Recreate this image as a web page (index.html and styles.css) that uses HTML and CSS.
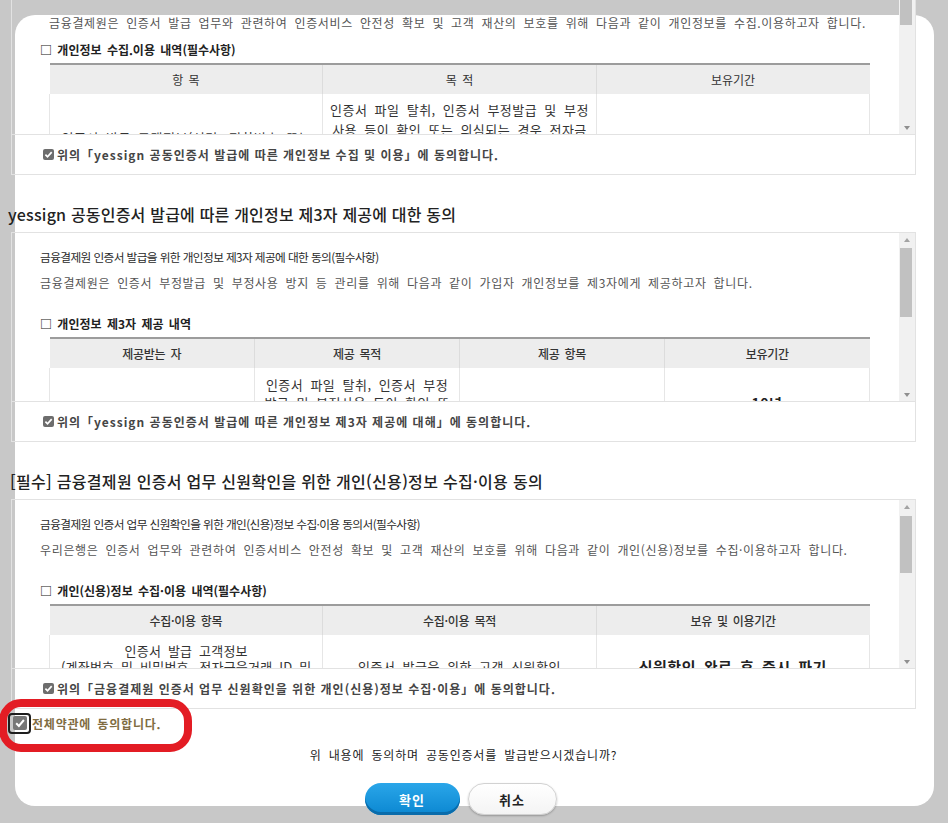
FILE: index.html
```
<!DOCTYPE html>
<html lang="ko">
<head>
    <meta charset="UTF-8">
    <meta name="viewport" content="width=device-width, initial-scale=1.0">
    <title>공동인증서 발급 약관동의</title>
    <link rel="stylesheet" href="styles.css">
</head>
<body>
    <div class="modal">
        <div class="modal-body">

            <div class="terms-box">
                <div class="scroll-area">
                    <div class="scroll-content first">
                        <p class="desc">금융결제원은 인증서 발급 업무와 관련하여 인증서비스 안전성 확보 및 고객 재산의 보호를 위해 다음과 같이 개인정보를 수집.이용하고자 합니다.</p>
                        <p class="sub-title first-sub">□ 개인정보 수집.이용 내역(필수사항)</p>
                        <table class="info-table">
                            <tr><th>항 목</th><th>목 적</th><th>보유기간</th></tr>
                            <tr>
                                <td class="raise">인증서 발급 고객정보(성명, 전화번호 또는<br>휴대폰번호, 이메일 등)</td>
                                <td>인증서 파일 탈취, 인증서 부정발급 및 부정<br>사용 등이 확인 또는 의심되는 경우 전자금<br>융거래 관련 법령에 따른 수사 협조 및 분쟁<br>해결, 인증서 발급 및 관리 업무 수행, 민원<br>처리 및 고객 안내</td>
                                <td class="strong">10년</td>
                            </tr>
                        </table>
                    </div>
                    <div class="scrollbar">
                        <span class="arrow up"></span>
                        <span class="thumb thumb-1"></span>
                        <span class="track"></span>
                        <span class="arrow down"></span>
                    </div>
                </div>
                <div class="agree-row">
                    <svg class="chk" width="11" height="11" viewBox="0 0 11 11"><rect width="11" height="11" rx="2" fill="#6d6d6d"/><path d="M2.4 5.7 L4.5 7.8 L8.7 3.1" fill="none" stroke="#fff" stroke-width="1.7"/></svg>
                    위의「yessign 공동인증서 발급에 따른 개인정보 수집 및 이용」에 동의합니다.
                </div>
            </div>

            <h3 class="terms-title">yessign 공동인증서 발급에 따른 개인정보 제3자 제공에 대한 동의</h3>
            <div class="terms-box">
                <div class="scroll-area">
                    <div class="scroll-content">
                        <p class="lead">금융결제원 인증서 발급을 위한 개인정보 제3자 제공에 대한 동의(필수사항)</p>
                        <p class="desc">금융결제원은 인증서 부정발급 및 부정사용 방지 등 관리를 위해 다음과 같이 가입자 개인정보를 제3자에게 제공하고자 합니다.</p>
                        <p class="sub-title">□ 개인정보 제3자 제공 내역</p>
                        <table class="info-table bold-head">
                            <tr><th>제공받는 자</th><th>제공 목적</th><th>제공 항목</th><th>보유기간</th></tr>
                            <tr>
                                <td class="low">금융결제원</td>
                                <td class="lines-tight">인증서 파일 탈취, 인증서 부정<br>발급 및 부정사용 등이 확인 또<br>는 의심되는 경우</td>
                                <td class="low">성명, 전화번호, 이메일</td>
                                <td class="strong">10년</td>
                            </tr>
                        </table>
                    </div>
                    <div class="scrollbar">
                        <span class="arrow up"></span>
                        <span class="thumb thumb-2"></span>
                        <span class="track"></span>
                        <span class="arrow down"></span>
                    </div>
                </div>
                <div class="agree-row">
                    <svg class="chk" width="11" height="11" viewBox="0 0 11 11"><rect width="11" height="11" rx="2" fill="#6d6d6d"/><path d="M2.4 5.7 L4.5 7.8 L8.7 3.1" fill="none" stroke="#fff" stroke-width="1.7"/></svg>
                    위의「yessign 공동인증서 발급에 따른 개인정보 제3자 제공에 대해」에 동의합니다.
                </div>
            </div>

            <h3 class="terms-title wide">[필수] 금융결제원 인증서 업무 신원확인을 위한 개인(신용)정보 수집·이용 동의</h3>
            <div class="terms-box">
                <div class="scroll-area">
                    <div class="scroll-content">
                        <p class="lead">금융결제원 인증서 업무 신원확인을 위한 개인(신용)정보 수집·이용 동의서(필수사항)</p>
                        <p class="desc">우리은행은 인증서 업무와 관련하여 인증서비스 안전성 확보 및 고객 재산의 보호를 위해 다음과 같이 개인(신용)정보를 수집·이용하고자 합니다.</p>
                        <p class="sub-title">□ 개인(신용)정보 수집·이용 내역(필수사항)</p>
                        <table class="info-table bold-head">
                            <tr><th>수집·이용 항목</th><th>수집·이용 목적</th><th>보유 및 이용기간</th></tr>
                            <tr>
                                <td class="lines-mid">인증서 발급 고객정보<br>(계좌번호 및 비밀번호, 전자금융거래 ID 및<br>비밀번호, 휴대폰번호 등)</td>
                                <td>인증서 발급을 위한 고객 신원확인</td>
                                <td class="strong big">신원확인 완료 후 즉시 파기</td>
                            </tr>
                        </table>
                    </div>
                    <div class="scrollbar">
                        <span class="arrow up"></span>
                        <span class="thumb thumb-3"></span>
                        <span class="track"></span>
                        <span class="arrow down"></span>
                    </div>
                </div>
                <div class="agree-row">
                    <svg class="chk" width="11" height="11" viewBox="0 0 11 11"><rect width="11" height="11" rx="2" fill="#6d6d6d"/><path d="M2.4 5.7 L4.5 7.8 L8.7 3.1" fill="none" stroke="#fff" stroke-width="1.7"/></svg>
                    위의「금융결제원 인증서 업무 신원확인을 위한 개인(신용)정보 수집·이용」에 동의합니다.
                </div>
            </div>

            <div class="all-agree">
                <span class="focus-ring">
                    <svg width="14" height="14" viewBox="0 0 14 14"><rect width="14" height="14" rx="2" fill="#777"/><path d="M3.2 7.2 L5.9 9.9 L10.9 4" fill="none" stroke="#fff" stroke-width="2"/></svg>
                </span>
                <span class="all-text">전체약관에 동의합니다.</span>
            </div>

            <p class="question">위 내용에 동의하며 공동인증서를 발급받으시겠습니까?</p>

            <div class="btns">
                <button class="btn btn-ok">확인</button>
                <button class="btn btn-cancel">취소</button>
            </div>
        </div>
    </div>
    <div class="highlight"></div>
</body>
</html>
```

FILE: styles.css
```
body{
    margin: 0;
    height: 823px;
    overflow: hidden;
    background: #c8c8c8;
    font-family: "Noto Sans CJK KR", "Noto Sans", sans-serif;
    color: #333;
}
p{
    margin: 0;
}

.modal {
    display: flow-root;
    width: 919px;
    height: 791px;
    margin: 15px 0 0 15px;
    background: #fff;
    border-radius: 20px;
}
.modal-body {
    width: 905px;
    margin: -50px 0 0 -4px;
}

.terms-title {
    margin: 27px 0 6px -3px;
    height: 24px;
    line-height: 24px;
    font-size: 16px;
    font-weight: 500;
    letter-spacing: 0.2px;
    color: #222;
    white-space: nowrap;
}
.terms-title.wide {
    margin-left: -1px;
    letter-spacing: 0.3px;
}

.terms-box {
    border: 1px solid #e2e2e2;
}
.scroll-area {
    display: flex;
    height: 168px;
    border-bottom: 1px solid #e2e2e2;
}
.scroll-content {
    flex: 1;
    overflow: hidden;
    padding: 14px 0 0 28px;
}
.scroll-content.first {
    padding-top: 47px;
}

.lead {
    line-height: 20px;
    font-size: 11.7px;
    letter-spacing: -0.6px;
    color: #2a2a2a;
    white-space: nowrap;
}
.desc {
    margin-top: 6px;
    line-height: 20px;
    font-size: 12px;
    letter-spacing: 0.65px;
    word-spacing: 3px;
    color: #555;
    white-space: nowrap;
}
.first .desc {
    margin-top: 0;
    padding-left: 9px;
}
.sub-title {
    margin-top: 21px;
    line-height: 20px;
    font-size: 12px;
    font-weight: 700;
    word-spacing: 2px;
    color: #222;
}
.first-sub {
    margin-top: 7px;
}

.info-table {
    width: 821px;
    margin: 3px 0 0 9px;
    border-collapse: collapse;
    table-layout: fixed;
}
.info-table th {
    height: 27px;
    background: #ededed;
    border-top: 2px solid #9c9c9c;
    border-left: 1px solid #dcdcdc;
    font-size: 12px;
    font-weight: 400;
    color: #333;
    word-spacing: 2px;
}
.info-table th:first-child {
    border-left: none;
}
.bold-head th {
    font-weight: 500;
    letter-spacing: -0.3px;
}
.info-table td {
    padding: 6px 6px;
    border: 1px solid #e6e6e6;
    border-top: none;
    text-align: center;
    vertical-align: middle;
    line-height: 20px;
    font-size: 13px;
    letter-spacing: 0.5px;
    word-spacing: 3px;
    color: #333;
    white-space: nowrap;
}
.info-table td.raise {
    padding-bottom: 10px;
}
.info-table td.low {
    vertical-align: bottom;
}
.info-table td.lines-tight {
    padding: 8px 4px;
    line-height: 18px;
}
.info-table td.lines-mid {
    padding: 8px 4px;
    line-height: 16px;
    letter-spacing: 0.2px;
}
.info-table td.strong {
    font-weight: 700;
    font-size: 14px;
    color: #222;
}
.info-table td.big {
    font-size: 15px;
}

.scrollbar {
    display: flex;
    flex-direction: column;
    width: 16px;
    background: #f1f1f1;
}
.arrow {
    position: relative;
    height: 14px;
    flex: none;
}
.arrow::after {
    content: "";
    position: absolute;
    left: 5px;
    width: 0;
    height: 0;
    border-left: 3px solid transparent;
    border-right: 3px solid transparent;
}
.arrow.up::after {
    top: 5px;
    border-bottom: 4px solid #a3a3a3;
}
.arrow.down::after {
    top: 6px;
    border-top: 4px solid #8f8f8f;
}
.thumb {
    flex: none;
    margin: 0 3px 0 1px;
    background: #c1c1c1;
}
.thumb-1 {
    height: 45px;
}
.thumb-2 {
    margin-top: 1px;
    height: 69px;
}
.thumb-3 {
    margin-top: 2px;
    height: 57px;
}
.track {
    flex: 1;
}

.agree-row {
    display: flex;
    align-items: center;
    gap: 3px;
    height: 39px;
    padding-left: 31px;
    font-size: 12px;
    font-weight: 700;
    letter-spacing: 1px;
    color: #454545;
    white-space: nowrap;
}
.chk {
    flex: none;
}

.all-agree {
    display: flex;
    align-items: center;
    height: 22px;
    margin: 3px 0 0 -3px;
}
.focus-ring {
    display: flex;
    align-items: center;
    justify-content: center;
    width: 19px;
    height: 17px;
    border: 2px solid #1e1e1e;
    border-radius: 4px;
}
.focus-ring svg {
    display: block;
}
.all-text {
    margin-left: 1px;
    font-size: 12px;
    font-weight: 700;
    letter-spacing: 0.8px;
    color: #806c41;
    word-spacing: 2px;
}

.question {
    margin-top: 11px;
    line-height: 20px;
    font-size: 12px;
    text-align: center;
    letter-spacing: 0.8px;
    word-spacing: 3px;
    color: #222;
}

.btns {
    display: flex;
    justify-content: center;
    gap: 8px;
    margin-top: 18px;
    padding-right: 6px;
}
.btn {
    height: 32px;
    border-radius: 16px;
    font-family: "Noto Sans CJK KR", sans-serif;
    font-size: 13px;
    font-weight: 700;
    letter-spacing: 1px;
    cursor: pointer;
}
.btn-ok {
    width: 95px;
    border: none;
    background: linear-gradient(#2aa6e9, #0b87d1);
    box-shadow: inset 0 -3px 0 #0a6cab;
    color: #fff;
}
.btn-cancel {
    width: 89px;
    border: 1px solid #d2d2d2;
    background: linear-gradient(#fff, #f4f4f4);
    box-shadow: 0 1px 2px rgba(0, 0, 0, 0.25);
    color: #222;
}

/* 빨간 표시 (캡처 위 강조 표시) */
.highlight {
    position: absolute;
    left: -1px;
    top: 699px;
    width: 193px;
    height: 53px;
    box-sizing: border-box;
    border: 8px solid #e31c24;
    border-radius: 22px;
}
```
